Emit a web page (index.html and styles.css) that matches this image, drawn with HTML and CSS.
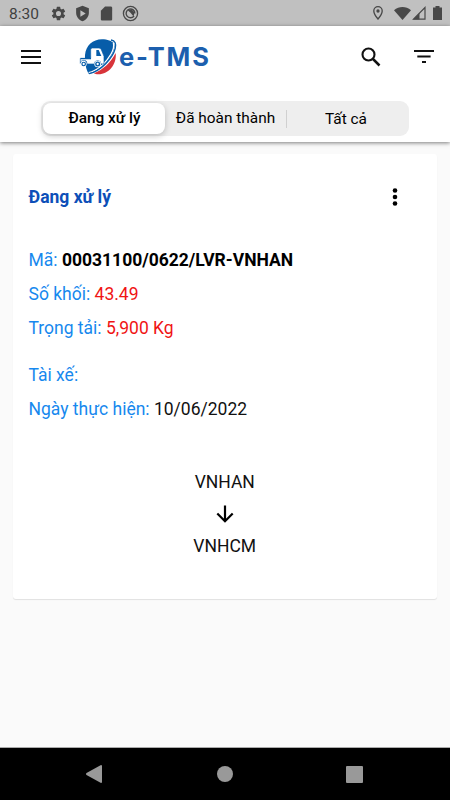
FILE: index.html
```html
<!DOCTYPE html>
<html lang="vi">
<head>
    <meta charset="UTF-8">
    <meta name="viewport" content="width=device-width, initial-scale=1.0">
    <title>e-TMS</title>
    <link rel="stylesheet" href="styles.css">
</head>
<body>
    <!-- Status bar -->
    <div class="status-bar">
        <span class="clock">8:30</span>
        <div class="status-left">
            <svg width="17" height="17" viewBox="0 0 24 24"><path fill="#484848" d="M19.14 12.94c.04-.3.06-.61.06-.94s-.02-.64-.07-.94l2.03-1.58a.49.49 0 0 0 .12-.61l-1.92-3.32a.49.49 0 0 0-.59-.22l-2.39.96a7 7 0 0 0-1.62-.94l-.36-2.54A.48.48 0 0 0 13.92 2.4h-3.84a.48.48 0 0 0-.48.41l-.36 2.54c-.59.24-1.13.57-1.62.94l-2.39-.96a.49.49 0 0 0-.59.22L2.74 8.87a.48.48 0 0 0 .12.61l2.03 1.58c-.05.3-.09.63-.09.94s.02.64.07.94l-2.03 1.58a.49.49 0 0 0-.12.61l1.92 3.32c.12.22.37.29.59.22l2.39-.96c.5.38 1.03.7 1.62.94l.36 2.54c.05.24.24.41.48.41h3.84c.24 0 .44-.17.47-.41l.36-2.54c.59-.24 1.13-.56 1.62-.94l2.39.96c.22.08.47 0 .59-.22l1.92-3.32a.48.48 0 0 0-.12-.61zM12 15.6a3.6 3.6 0 1 1 0-7.2 3.6 3.6 0 0 1 0 7.2z"/></svg>
            <svg width="17" height="17" viewBox="0 0 24 24"><path fill="#484848" fill-rule="evenodd" d="M12 1 3 4.500V11c0 5.500 3.800 10.300 9 12 5.200-1.700 9-6.500 9-12V4.500zM9 7.500 16.500 12 9 16.500z"/></svg>
            <svg width="17" height="17" viewBox="0 0 24 24"><path fill="#484848" d="M18 2h-8L4 8v12c0 1.100.9 2 2 2h12c1.100 0 2-.9 2-2V4c0-1.100-.9-2-2-2z"/></svg>
            <svg width="17" height="17" viewBox="0 0 24 24"><circle cx="12" cy="12" r="10" fill="none" stroke="#484848" stroke-width="1.900"/><path fill="none" stroke="#484848" stroke-width="2" d="M17 15.500A6.200 6.200 0 1 1 18.200 12"/><path fill="#484848" d="M8 7.500c3-2 7.500-1 9 2.500.6 2 .3 4-1 6L12 11z"/></svg>
        </div>
        <div class="status-right">
            <svg width="16" height="16" viewBox="0 0 24 24"><path fill="none" stroke="#484848" stroke-width="2" d="M12 2.500c-3.600 0-6.300 2.800-6.300 6.400C5.700 13.500 12 21 12 21s6.300-7.500 6.300-12.100c0-3.600-2.700-6.400-6.300-6.400z"/><circle cx="12" cy="9" r="2.500" fill="#484848"/></svg>
            <svg class="wifi" width="17" height="13" viewBox="0 0 17 13"><path fill="#484848" d="M0 3.200C5 -1 12 -1 17 3.200L8.500 13z"/></svg>
            <svg class="signal" width="14" height="14" viewBox="0 0 14 14"><path fill="none" stroke="#484848" stroke-width="1.200" d="M1.500 13.200 13 1.500v11.700z"/><path fill="#484848" d="M1 13.500 7.500 7v6.500z"/></svg>
            <svg width="9" height="14" viewBox="0 0 9 14"><path fill="#484848" d="M2.500 0h4v1.500H9V14H0V1.500h2.500z"/></svg>
        </div>
    </div>

    <!-- App bar -->
    <header class="app-bar">
        <div class="toolbar">
            <svg class="menu-icon" width="20" height="14" viewBox="0 0 20 14"><path fill="#111" d="M0 0h20v2H0zM0 6h20v2H0zM0 12h20v2H0z"/></svg>
            <div class="logo">
                <svg width="44" height="44" viewBox="0 0 132 132">
                    <path fill="#075da9" d="M21 60C24 32 44 13 72 13c16 0 30 5 37 14 5 16-14 50-40 71-12 10-26 17-37 18-8-12-12-34-11-56z"/>
                    <path fill="#d8343a" d="M113 54c4 33-20 64-52 64-6 0-10-1-13-3 27-11 50-32 65-61z"/>
                    <path fill="none" stroke="#fff" stroke-width="4" d="M106 24c6 17-12 48-37 70-12 10-26 17-37 19"/>
                    <path fill="none" stroke="#075da9" stroke-width="4" d="M99 15c26 3 13 41-16 71-15 15-32 26-50 30"/>
                    <!-- truck -->
                    <path fill="#fff" stroke="#075da9" stroke-width="2" d="M38 70V44q0-5 5-5h20q5 0 7 5l8 20v18q0 5-4 5h-5a10 10 0 0 0-20 0H27a10 10 0 0 0-20-2V70z"/>
                    <path fill="#075da9" d="M55 45h7l8 18H55zM8 69h31v4H8z"/>
                    <circle cx="17" cy="87" r="9" fill="#fff"/><circle cx="17" cy="87" r="7" fill="#075da9"/><circle cx="17" cy="87" r="3.500" fill="#fff"/>
                    <circle cx="59" cy="87" r="10" fill="#fff"/><circle cx="59" cy="87" r="7.500" fill="#075da9"/><circle cx="59" cy="87" r="3.500" fill="#fff"/>
                </svg>
                <span class="logo-text">e-TMS</span>
            </div>
            <svg class="search-icon" width="20" height="20" viewBox="0 0 20 20"><circle cx="7.500" cy="7.500" r="6" fill="none" stroke="#111" stroke-width="2.100"/><path stroke="#111" stroke-width="2.500" d="m12 12 6.500 6.500"/></svg>
            <svg class="filter-icon" width="20" height="13" viewBox="0 0 20 13"><path fill="#111" d="M0 0h20v2H0zM3.300 5.500h13.300v2H3.300zM8 11h4v2H8z"/></svg>
        </div>
        <div class="tabs">
            <div class="tab active">Đang xử lý</div>
            <div class="tab">Đã hoàn thành</div>
            <div class="tab last">Tất cả</div>
        </div>
    </header>

    <main class="content">
        <div class="card">
            <div class="card-header">
                <h2>Đang xử lý</h2>
                <svg width="6" height="18" viewBox="0 0 6 18"><circle cx="3" cy="2.500" r="2.300"/><circle cx="3" cy="9" r="2.300"/><circle cx="3" cy="15.500" r="2.300"/></svg>
            </div>
            <div class="info">
                <p>Mã: <b>00031100/0622/LVR-VNHAN</b></p>
                <p>Số khối: <span class="red">43.49</span></p>
                <p>Trọng tải: <span class="red">5,900 Kg</span></p>
            </div>
            <div class="info">
                <p>Tài xế:</p>
                <p>Ngày thực hiện: <span class="date">10/06/2022</span></p>
            </div>
            <div class="route">
                <span>VNHAN</span>
                <svg width="18" height="18" viewBox="0 0 18 18"><path fill="none" stroke="#000" stroke-width="2.200" d="M9 .5v15.500M1.300 8.500 9 16.200l7.700-7.700"/></svg>
                <span>VNHCM</span>
            </div>
        </div>
    </main>

    <!-- Android navigation -->
    <nav class="nav-bar">
        <svg width="17" height="18" viewBox="0 0 17 18"><path fill="#999" d="M15 0q1 0 1 1v16q0 1-1 1L.5 10q-1-1 0-2z"/></svg>
        <svg width="16" height="16" viewBox="0 0 16 16"><circle cx="8" cy="8" r="8" fill="#999"/></svg>
        <svg width="17" height="17" viewBox="0 0 17 17"><rect width="17" height="17" rx="1" fill="#999"/></svg>
    </nav>
</body>
</html>
```
FILE: styles.css
```css
* {
    box-sizing: border-box;
}

body {
    margin: 0;
    height: 800px;
    display: flex;
    flex-direction: column;
    overflow: hidden;
    background: #fafafa;
    color: #000;
    font-family: Roboto, "Liberation Sans", sans-serif;
}

svg {
    display: block;
    flex: none;
}

.status-bar {
    height: 26px;
    display: flex;
    align-items: center;
    padding: 0 8px 0 9px;
    background: #c0c0c0;
}

.clock {
    width: 41px;
    font-size: 15.5px;
    line-height: 26px;
    padding-top: 1px;
    color: #404040;
}

.status-left {
    display: flex;
    gap: 7px;
}

.status-right {
    display: flex;
    align-items: center;
    margin-left: auto;
}

.wifi {
    margin-left: 8px;
}

.signal {
    margin: 0 7px 0 1px;
}

/* header */
.app-bar {
    height: 116px;
    background: #fff;
    box-shadow: 0 1px 4px rgba(0, 0, 0, 0.5);
}

.toolbar {
    height: 61px;
    display: flex;
    align-items: center;
    padding: 0 16px 0 21px;
}

.logo {
    display: flex;
    align-items: center;
    margin-left: 37px;
}

.logo-text {
    color: #1c5fae;
    font-family: Inter, Roboto, sans-serif;
    font-size: 25.5px;
    font-weight: 700;
    line-height: 38px;
    letter-spacing: 1.8px;
    margin-left: -3px;
}

.search-icon {
    margin-left: auto;
    margin-right: 33px;
}

.tabs {
    display: flex;
    align-items: center;
    width: 368px;
    height: 35px;
    margin: 14px 0 0 41px;
    padding: 2px;
    border-radius: 9px;
    background: #eee;
}

.tab {
    width: 121px;
    text-align: center;
    font-size: 15.4px;
    line-height: 31px;
    white-space: nowrap;
}

.tab.active {
    width: 122px;
    padding-left: 1px;
    background: #fff;
    border-radius: 8px;
    font-weight: 500;
    box-shadow: 0 2px 6px rgba(0, 0, 0, 0.22);
}

.tab.last {
    line-height: 18px;
    border-left: 1px solid #d0d0d0;
    padding-right: 2px;
}

/* order card */
.content {
    flex: 1;
    padding: 12px 13px;
}

.card {
    height: 445px;
    padding: 28px 16px 0 15.5px;
    background: #fff;
    border-radius: 3px;
    box-shadow: 0 1px 1px rgba(0, 0, 0, 0.1);
    font-size: 17.5px;
}

.card-header {
    display: flex;
    align-items: center;
    justify-content: space-between;
    height: 30px;
    margin-bottom: 31px;
    padding-right: 23px;
}

.card-header h2 {
    margin: 0;
    font-size: 17.5px;
    font-weight: 700;
    color: #0d4fb8;
}

.info {
    margin-bottom: 13px;
    color: #1688ee;
}

.info p {
    margin: 0;
    line-height: 34px;
}

.info b {
    color: #000;
}

.info .red {
    color: #f01414;
}

.info .date {
    color: #111;
}

.route {
    display: flex;
    flex-direction: column;
    align-items: center;
    gap: 7px;
    margin-top: 40px;
    line-height: 32px;
}

.route span {
    color: #111;
}

.nav-bar {
    height: 53px;
    display: flex;
    align-items: center;
    justify-content: space-between;
    padding: 0 87px 0 86px;
    background: #000;
    border-top: 1px solid #aaa;
}
```
